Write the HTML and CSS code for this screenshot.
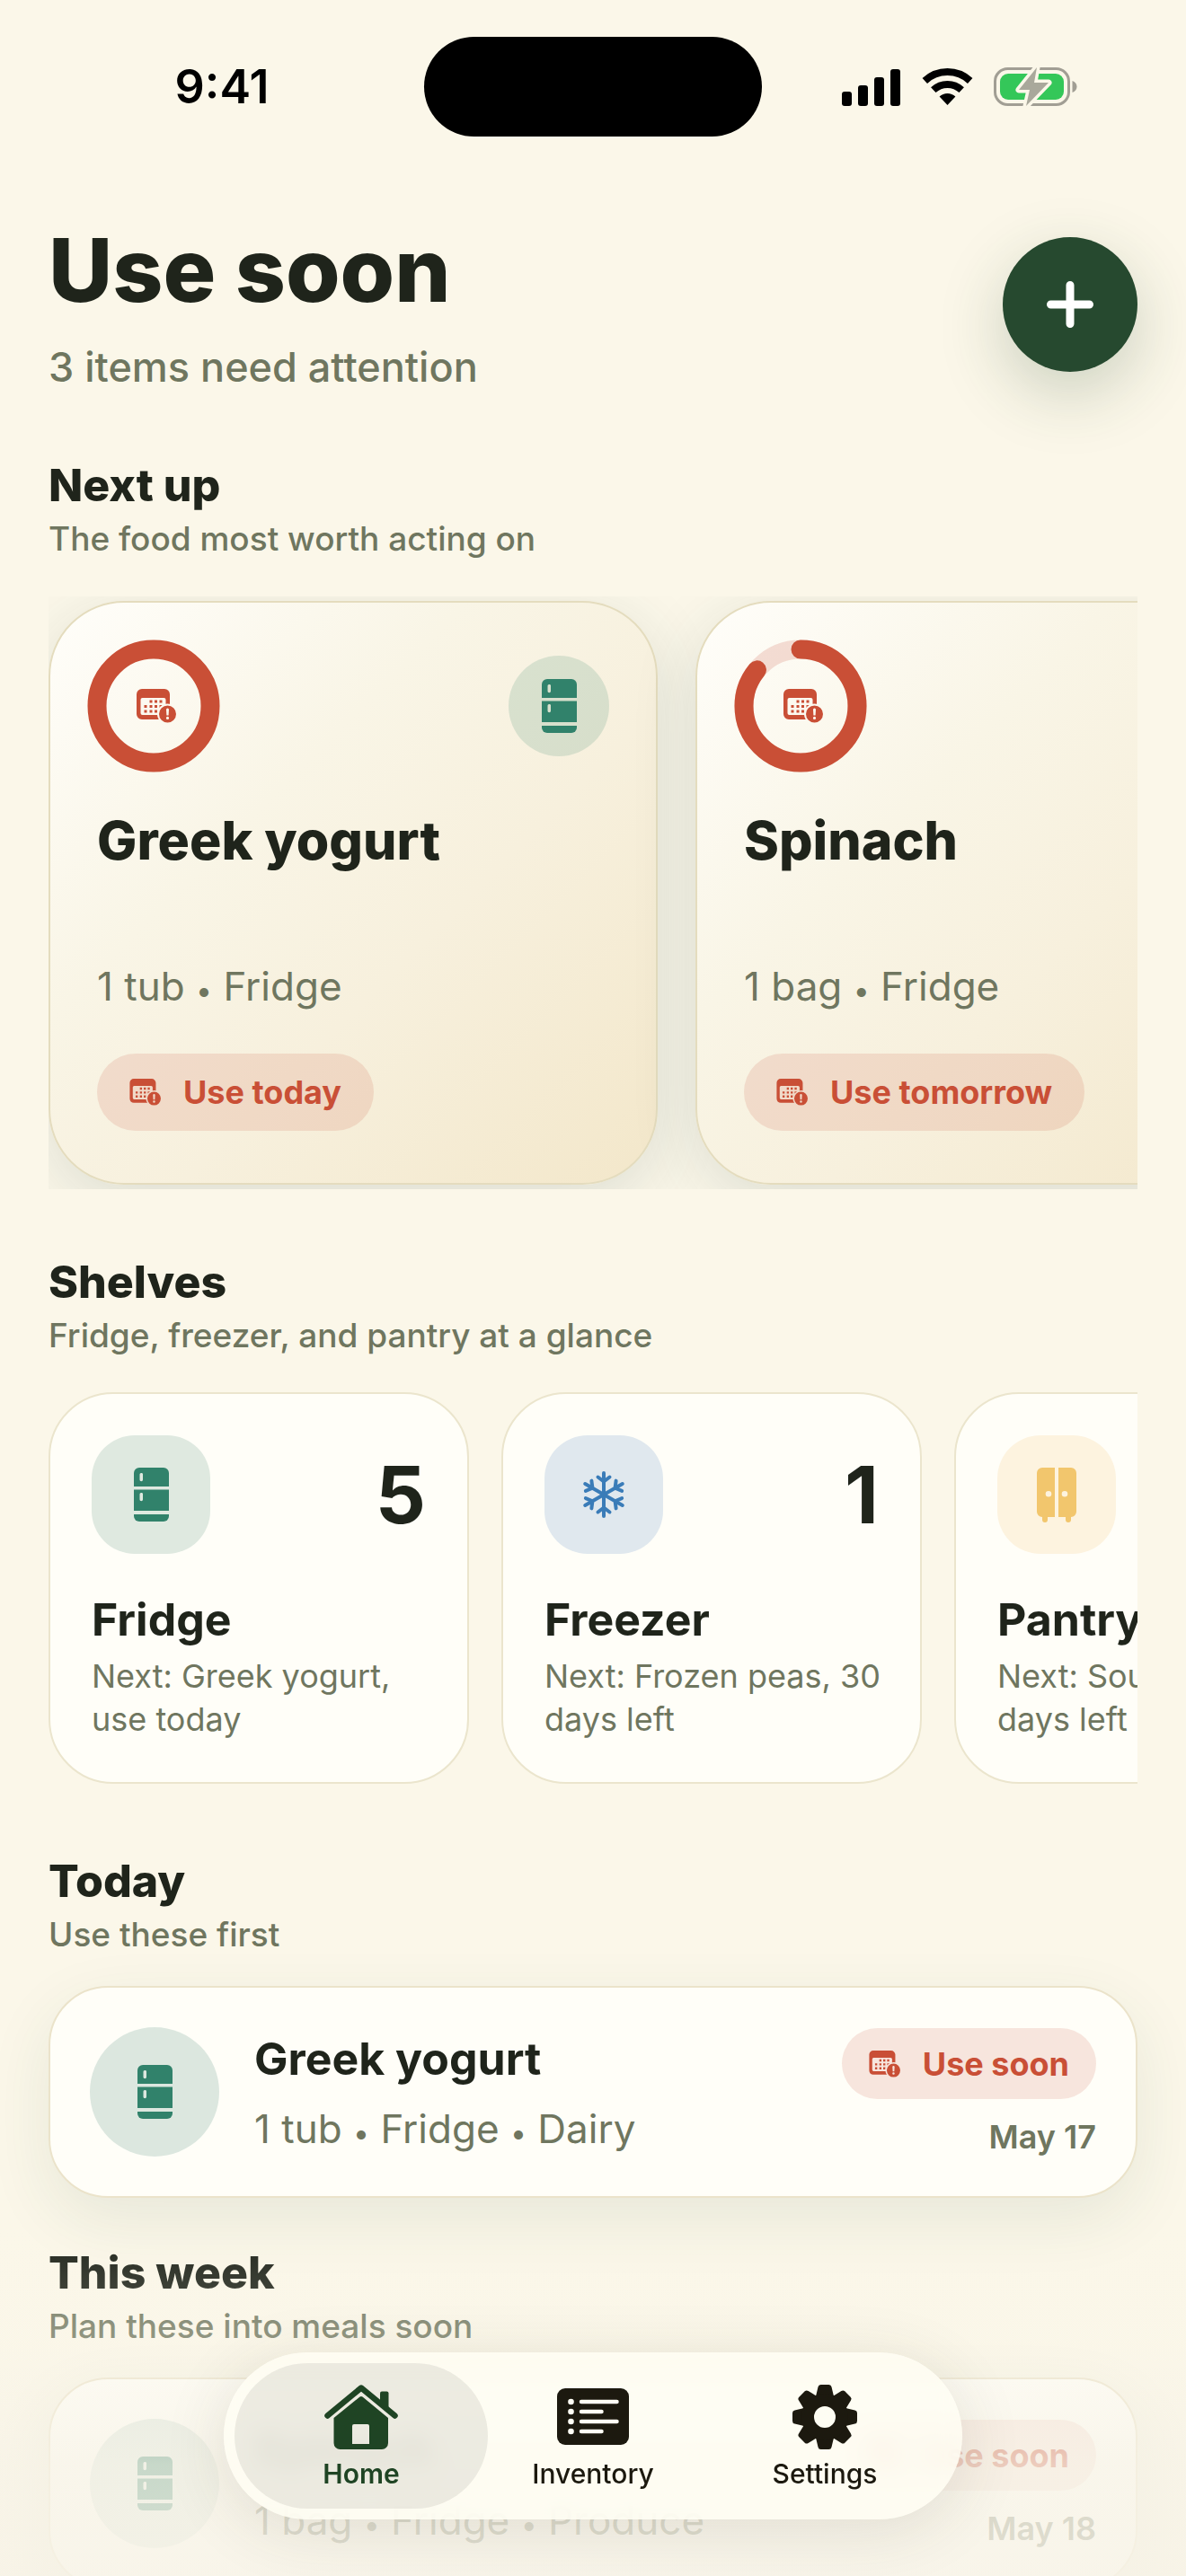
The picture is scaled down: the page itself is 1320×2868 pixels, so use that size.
FILE: index.html
```html
<!DOCTYPE html>
<html lang="en">
<head>
    <meta charset="UTF-8">
    <meta name="viewport" content="width=device-width, initial-scale=1.0">
    <title>Use soon</title>
    <link rel="stylesheet" href="styles.css">
</head>
<body>
    <!-- Shared icons -->
    <svg class="icon-defs" aria-hidden="true">
        <symbol id="icon-fridge" viewBox="0 0 39 60">
            <path fill-rule="evenodd" d="M6 0h27a6 6 0 0 1 6 6v15H0V6a6 6 0 0 1 6-6zM8 6a1.500 1.500 0 0 0-1.500 1.500v6a1.500 1.500 0 0 0 3.500 0v-6A1.500 1.500 0 0 0 8 6z"/>
            <path fill-rule="evenodd" d="M0 24.500h39v23.500H0zM8 28a1.500 1.500 0 0 0-1.500 1.500v6a1.500 1.500 0 0 0 3.500 0v-6A1.500 1.500 0 0 0 8 28z"/>
            <path d="M0 52h39v2a6 6 0 0 1-6 6H6a6 6 0 0 1-6-6z"/>
        </symbol>
        <symbol id="icon-calendar" viewBox="0 0 45 38">
            <mask id="badge-cut">
                <rect width="45" height="38" fill="#fff"/>
                <circle cx="34.500" cy="28" r="11.500" fill="#000"/>
            </mask>
            <g mask="url(#badge-cut)">
                <path fill-rule="evenodd" d="M6 0h25a6 6 0 0 1 6 6v22a6 6 0 0 1-6 6H6a6 6 0 0 1-6-6V6a6 6 0 0 1 6-6zM6.500 10a2 2 0 0 0-2 2v15a2 2 0 0 0 2 2h24a2 2 0 0 0 2-2V12a2 2 0 0 0-2-2z"/>
                <path d="M14.500 12.500h3v3h-3zM20 12.500h3v3h-3zM25.500 12.500h3v3h-3zM8.500 18h3v3h-3zM14.500 18h3v3h-3zM20 18h3v3h-3zM25.500 18h3v3h-3zM8.500 23.500h3v3h-3zM14.500 23.500h3v3h-3zM20 23.500h3v3h-3z"/>
            </g>
            <path fill-rule="evenodd" d="M34.500 18.500a9.500 9.500 0 1 1 0 19a9.500 9.500 0 0 1 0-19zM33 23l.4 6.500h2.200l.4-6.500a1.500 1.500 0 0 0-3 0zM34.500 30.800a1.600 1.600 0 1 0 0 3.200a1.600 1.600 0 0 0 0-3.200z"/>
        </symbol>
        <symbol id="icon-snowflake" viewBox="-26 -26 52 52">
            <g id="snow-arm" fill="none" stroke="currentColor" stroke-width="4" stroke-linecap="round" stroke-linejoin="round">
                <path d="M0 0V-24M-6.500-19.500L0-14.500L6.500-19.500"/>
            </g>
            <use href="#snow-arm" transform="rotate(60)"/>
            <use href="#snow-arm" transform="rotate(120)"/>
            <use href="#snow-arm" transform="rotate(180)"/>
            <use href="#snow-arm" transform="rotate(240)"/>
            <use href="#snow-arm" transform="rotate(300)"/>
        </symbol>
        <symbol id="icon-cabinet" viewBox="0 0 44 61">
            <path fill-rule="evenodd" d="M6 0h14v55h-8v3a3 3 0 0 1-6 0v-3a6 6 0 0 1-6-6V6a6 6 0 0 1 6-6zM13 26a3.300 3.300 0 1 0 0 6.600a3.300 3.300 0 0 0 0-6.600z"/>
            <path fill-rule="evenodd" d="M24 0h14a6 6 0 0 1 6 6v43a6 6 0 0 1-6 6v3a3 3 0 0 1-6 0v-3h-8zM31 26a3.300 3.300 0 1 0 0 6.600a3.300 3.300 0 0 0 0-6.600z"/>
        </symbol>
    </svg>

    <div class="screen">
        <div class="status-bar">
            <span class="status-time">9:41</span>
            <span class="island"></span>
            <div class="status-icons">
                <svg width="67" height="42" viewBox="0 0 67 42" aria-hidden="true">
                    <rect x="0" y="26" width="11" height="16" rx="3"/>
                    <rect x="18" y="19" width="11" height="23" rx="3"/>
                    <rect x="36" y="10" width="11" height="32" rx="3"/>
                    <rect x="54" y="1" width="11" height="41" rx="3"/>
                </svg>
                <svg width="57" height="41" viewBox="0 0 57 41" aria-hidden="true">
                    <path d="M3.300 14A37 37 0 0 1 53.700 14M12.800 24.200A23 23 0 0 1 44.200 24.200" fill="none" stroke="#000" stroke-width="8"/>
                    <path d="M28.500 41L19.600 31.500A13 13 0 0 1 37.400 31.500z"/>
                </svg>
                <svg width="94" height="47" viewBox="0 0 94 47" aria-hidden="true">
                    <rect x="2.500" y="3.500" width="82" height="40" rx="14" fill="none" stroke="#a19e94" stroke-width="3"/>
                    <path d="M88.500 17c3 1 5 3.500 5 6.500s-2 5.500-5 6.500z" fill="#a19e94"/>
                    <rect x="8" y="9" width="71" height="29" rx="9" fill="#34c759"/>
                    <path class="bolt" d="M49 2L29 27h12l-4 18l25-26H46z"/>
                </svg>
            </div>
        </div>

        <main class="content">
            <header class="page-header">
                <div>
                    <h1>Use soon</h1>
                    <p class="subtitle">3 items need attention</p>
                </div>
                <button class="add-button" type="button" aria-label="Add item">
                    <svg width="52" height="52" viewBox="0 0 52 52" aria-hidden="true">
                        <path d="M26 4.500v43M4.500 26h43" stroke="#fff" stroke-width="9" stroke-linecap="round"/>
                    </svg>
                </button>
            </header>

            <section class="section">
                <h2>Next up</h2>
                <p class="section-note">The food most worth acting on</p>
                <div class="strip featured-strip">
                    <article class="featured-card">
                        <div class="featured-top">
                            <div class="ring">
                                <svg class="ring-track" viewBox="0 0 148 148" aria-hidden="true">
                                    <circle class="ring-value" cx="74" cy="74" r="63"/>
                                </svg>
                                <svg class="ring-icon" aria-hidden="true"><use href="#icon-calendar"/></svg>
                            </div>
                            <span class="place-badge"><svg class="fridge-icon" aria-hidden="true"><use href="#icon-fridge"/></svg></span>
                        </div>
                        <h3 class="featured-name">Greek yogurt</h3>
                        <p class="meta">1 tub <span class="dot">•</span> Fridge</p>
                        <span class="chip chip-large"><svg class="chip-icon" aria-hidden="true"><use href="#icon-calendar"/></svg>Use today</span>
                    </article>
                    <article class="featured-card">
                        <div class="featured-top">
                            <div class="ring">
                                <svg class="ring-track" viewBox="0 0 148 148" aria-hidden="true">
                                    <circle class="ring-base" cx="74" cy="74" r="63"/>
                                    <circle class="ring-value" cx="74" cy="74" r="63" pathLength="100" stroke-dasharray="86 14"/>
                                </svg>
                                <svg class="ring-icon" aria-hidden="true"><use href="#icon-calendar"/></svg>
                            </div>
                            <span class="place-badge"><svg class="fridge-icon" aria-hidden="true"><use href="#icon-fridge"/></svg></span>
                        </div>
                        <h3 class="featured-name">Spinach</h3>
                        <p class="meta">1 bag <span class="dot">•</span> Fridge</p>
                        <span class="chip chip-large"><svg class="chip-icon" aria-hidden="true"><use href="#icon-calendar"/></svg>Use tomorrow</span>
                    </article>
                </div>
            </section>

            <section class="section">
                <h2>Shelves</h2>
                <p class="section-note">Fridge, freezer, and pantry at a glance</p>
                <div class="strip shelf-strip">
                    <article class="shelf-card">
                        <div class="shelf-top">
                            <span class="tile tile-fridge"><svg class="fridge-icon" aria-hidden="true"><use href="#icon-fridge"/></svg></span>
                            <span class="count">5</span>
                        </div>
                        <h3 class="item-name">Fridge</h3>
                        <p class="shelf-note">Next: Greek yogurt, use today</p>
                    </article>
                    <article class="shelf-card">
                        <div class="shelf-top">
                            <span class="tile tile-freezer"><svg class="snow-icon" aria-hidden="true"><use href="#icon-snowflake"/></svg></span>
                            <span class="count">1</span>
                        </div>
                        <h3 class="item-name">Freezer</h3>
                        <p class="shelf-note">Next: Frozen peas, 30 days left</p>
                    </article>
                    <article class="shelf-card">
                        <div class="shelf-top">
                            <span class="tile tile-pantry"><svg class="cabinet-icon" aria-hidden="true"><use href="#icon-cabinet"/></svg></span>
                        </div>
                        <h3 class="item-name">Pantry</h3>
                        <p class="shelf-note">Next: Sourdough, 2 days left</p>
                    </article>
                </div>
            </section>

            <section class="section">
                <h2>Today</h2>
                <p class="section-note">Use these first</p>
                <article class="item-row">
                    <span class="item-badge"><svg class="fridge-icon" aria-hidden="true"><use href="#icon-fridge"/></svg></span>
                    <div class="item-text">
                        <h3 class="item-name">Greek yogurt</h3>
                        <p class="meta">1 tub <span class="dot">•</span> Fridge <span class="dot">•</span> Dairy</p>
                    </div>
                    <div class="item-side">
                        <span class="chip"><svg class="chip-icon" aria-hidden="true"><use href="#icon-calendar"/></svg>Use soon</span>
                        <time class="item-date">May 17</time>
                    </div>
                </article>
            </section>

            <section class="section section-week">
                <h2>This week</h2>
                <p class="section-note">Plan these into meals soon</p>
                <article class="item-row">
                    <span class="item-badge"><svg class="fridge-icon" aria-hidden="true"><use href="#icon-fridge"/></svg></span>
                    <div class="item-text">
                        <h3 class="item-name">Spinach</h3>
                        <p class="meta">1 bag <span class="dot">•</span> Fridge <span class="dot">•</span> Produce</p>
                    </div>
                    <div class="item-side">
                        <span class="chip"><svg class="chip-icon" aria-hidden="true"><use href="#icon-calendar"/></svg>Use soon</span>
                        <time class="item-date">May 18</time>
                    </div>
                </article>
            </section>
        </main>

        <div class="bottom-fade"></div>

        <nav class="tab-bar">
            <button class="tab tab-active" type="button">
                <svg width="82" height="72" viewBox="0 0 82 72" aria-hidden="true">
                    <path d="M3.500 34.500L41 3.500L78.500 34.500" fill="none" stroke="currentColor" stroke-width="6.500" stroke-linecap="round" stroke-linejoin="round"/>
                    <path d="M62 22V9.500a2 2 0 0 1 2-2h5.500a2 2 0 0 1 2 2V30z"/>
                    <path fill-rule="evenodd" d="M39.500 13.500a2.500 2.500 0 0 1 3 0L71 37v28a7 7 0 0 1-7 7H17.500a7 7 0 0 1-7-7V37zM33 44a2 2 0 0 0-2 2v20h19V46a2 2 0 0 0-2-2z"/>
                </svg>
                Home
            </button>
            <button class="tab" type="button">
                <svg width="80" height="72" viewBox="0 -4 80 72" aria-hidden="true">
                    <rect width="80" height="63" rx="9"/>
                    <g fill="#fffef5">
                        <circle cx="15.500" cy="15" r="3.300"/>
                        <circle cx="15.500" cy="26" r="3.300"/>
                        <circle cx="15.500" cy="37" r="3.300"/>
                        <circle cx="15.500" cy="48" r="3.300"/>
                    </g>
                    <path d="M27 15h39.500M27 26h22.500M27 37h39.500M27 48h22.500" stroke="#fffef5" stroke-width="4.500" stroke-linecap="round"/>
                </svg>
                Inventory
            </button>
            <button class="tab" type="button">
                <svg width="72" height="72" viewBox="-36 -36 72 72" aria-hidden="true">
                    <path id="gear-tooth" d="M-10-23L-7.500-33.500Q-7-36-4.500-36H4.500Q7-36 7.500-33.500L10-23z"/>
                    <use href="#gear-tooth" transform="rotate(45)"/>
                    <use href="#gear-tooth" transform="rotate(90)"/>
                    <use href="#gear-tooth" transform="rotate(135)"/>
                    <use href="#gear-tooth" transform="rotate(180)"/>
                    <use href="#gear-tooth" transform="rotate(225)"/>
                    <use href="#gear-tooth" transform="rotate(270)"/>
                    <use href="#gear-tooth" transform="rotate(315)"/>
                    <circle r="19" fill="none" stroke="currentColor" stroke-width="14"/>
                </svg>
                Settings
            </button>
        </nav>
    </div>
</body>
</html>
```

FILE: styles.css
```css
* {
    margin: 0;
    padding: 0;
    box-sizing: border-box;
}

body {
    background-color: #fbf7e9;
    color: #1f241b;
    font-family: Inter, "Liberation Sans", sans-serif;
}

button {
    border: none;
    background: none;
    font-family: inherit;
    cursor: pointer;
}

.icon-defs {
    position: absolute;
    width: 0;
    height: 0;
}

.screen svg {
    display: block;
    flex-shrink: 0;
}

.screen {
    position: relative;
    height: 100vh;
    overflow: hidden;
}

/* Status bar */
.status-bar {
    display: grid;
    grid-template-columns: 1fr 376px 1fr;
    align-items: center;
    height: 186px;
    padding-top: 7px;
    color: #000;
}

.status-time {
    padding-left: 22px;
    text-align: center;
    font-size: 52px;
    font-weight: 600;
}

.island {
    height: 111px;
    border-radius: 56px;
    background-color: #000;
}

.status-icons {
    display: flex;
    align-items: center;
    justify-content: center;
    gap: 22px;
    padding-right: 32px;
}

.bolt {
    fill: #a9a89b;
    stroke: #fbf7e9;
    stroke-width: 7;
    stroke-linejoin: round;
    paint-order: stroke;
}

/* Header */
.content {
    padding: 55px 54px 0;
}

.page-header {
    display: flex;
    align-items: center;
    justify-content: space-between;
    margin-bottom: 74px;
}

h1 {
    font-size: 98px;
    font-weight: 800;
    line-height: 120px;
}

.subtitle {
    margin-top: 21px;
    font-size: 45px;
    font-weight: 500;
    line-height: 54px;
    color: #6f765f;
}

.add-button {
    display: flex;
    align-items: center;
    justify-content: center;
    width: 150px;
    height: 150px;
    border-radius: 50%;
    background-color: #26492f;
    box-shadow: 0 24px 72px rgba(38, 73, 47, 0.22);
}

/* Sections */
.section {
    margin-bottom: 78px;
}

h2 {
    font-size: 50px;
    font-weight: 800;
    line-height: 60px;
}

.section-note {
    margin-top: 9px;
    font-size: 37px;
    font-weight: 500;
    line-height: 42px;
    color: #6f765f;
}

.section-week {
    margin-top: -25px;
}

.strip {
    display: flex;
    overflow-x: auto;
    scrollbar-width: none;
}

.meta {
    font-size: 44px;
    line-height: 54px;
    color: #6f765f;
}

.dot {
    font-size: 32px;
    line-height: 1;
}

.item-name {
    font-size: 50px;
    font-weight: 700;
    line-height: 60px;
}

/* Chips */
.chip {
    display: flex;
    align-items: center;
    gap: 24px;
    height: 79px;
    padding: 0 30px;
    border-radius: 40px;
    background-color: rgba(201, 79, 54, 0.14);
    color: #c94f36;
    font-size: 36px;
    font-weight: 700;
    white-space: nowrap;
}

.chip-large {
    align-self: flex-start;
    height: 86px;
    margin-top: 48px;
    padding: 0 36px;
    border-radius: 43px;
}

.chip-icon {
    width: 36px;
    height: 30px;
    fill: currentColor;
}

.fridge-icon {
    width: 39px;
    height: 60px;
    fill: #31826b;
}

/* Next up */
.featured-strip {
    gap: 42px;
    margin-top: 43px;
    margin-bottom: -5px;
    padding: 5px 0;
}

.featured-card {
    display: flex;
    flex: 0 0 678px;
    flex-direction: column;
    min-height: 650px;
    padding: 52px;
    border: 2px solid #e4dcbe;
    border-radius: 84px;
    background: linear-gradient(135deg, #fffefa 0%, #f9f5e6 35%, #f7f0dd 60%, #f3e7ca 100%);
    box-shadow: 0 18px 72px rgba(38, 73, 70, 0.14);
}

.featured-top {
    display: flex;
    align-items: center;
    justify-content: space-between;
}

.ring {
    display: grid;
    place-items: center;
    width: 126px;
    height: 126px;
}

.ring-track,
.ring-icon {
    grid-area: 1 / 1;
}

/* The stroke runs half outside the ring's own box */
.ring-track {
    width: 148px;
    height: 148px;
    margin: -11px;
    fill: none;
    stroke: #c94f36;
    stroke-width: 21;
    stroke-linecap: round;
    transform: rotate(-90deg);
}

.ring-base {
    opacity: 0.18;
}

.ring-icon {
    width: 45px;
    height: 38px;
    margin-left: 7px;
    fill: #c94f36;
}

.place-badge {
    display: grid;
    place-items: center;
    width: 112px;
    height: 112px;
    border-radius: 50%;
    background-color: rgba(49, 130, 107, 0.16);
}

.featured-name {
    min-height: 144px;
    margin-top: 51px;
    margin-bottom: 27px;
    font-size: 59px;
    font-weight: 800;
    line-height: 72px;
}

/* Shelves */
.shelf-strip {
    gap: 36px;
    margin-top: 42px;
}

.shelf-card {
    flex: 0 0 468px;
    padding: 46px;
    border: 2px solid #ebe5cd;
    border-radius: 72px;
    background-color: #fffef8;
}

.shelf-top {
    display: flex;
    align-items: center;
    justify-content: space-between;
    margin-bottom: 43px;
}

.tile {
    display: grid;
    place-items: center;
    width: 132px;
    height: 132px;
    border-radius: 48px;
}

.tile-fridge {
    background-color: #dfe9e0;
}

.tile-freezer {
    background-color: #e0e8ee;
    color: #3a7cb8;
}

.tile-pantry {
    background-color: #fdf3df;
}

.snow-icon {
    width: 52px;
    height: 52px;
}

.cabinet-icon {
    width: 44px;
    height: 61px;
    fill: #f2c66d;
}

.count {
    font-size: 88px;
    font-weight: 700;
    line-height: 108px;
}

.shelf-note {
    margin-top: 9px;
    margin-right: -12px;
    font-size: 36px;
    line-height: 48px;
    color: #6f765f;
}

/* Item rows */
.item-row {
    display: flex;
    align-items: center;
    margin-top: 36px;
    padding: 44px;
    border: 2px solid #ebe3ca;
    border-radius: 66px;
    background-color: #fffef8;
    box-shadow: 0 24px 72px rgba(38, 73, 60, 0.09);
}

.item-badge {
    display: grid;
    place-items: center;
    width: 144px;
    height: 144px;
    margin-right: 39px;
    border-radius: 50%;
    background-color: #dce7df;
}

.item-text {
    flex: 1;
}

.item-text .meta {
    margin-top: 21px;
}

.item-side {
    display: flex;
    flex-direction: column;
    align-items: flex-end;
    gap: 21px;
}

.item-date {
    font-size: 36px;
    font-weight: 600;
    line-height: 42px;
    color: #6f765f;
}

/* Content fades out behind the tab bar */
.bottom-fade {
    position: absolute;
    right: 0;
    bottom: 0;
    left: 0;
    height: 388px;
    background: linear-gradient(rgba(250, 246, 233, 0), rgba(249, 245, 232, 0.25) 32%, rgba(247, 243, 231, 0.76) 68%, rgba(247, 243, 231, 0.84));
    pointer-events: none;
}

/* Tab bar */
.tab-bar {
    position: absolute;
    bottom: 63px;
    left: 50%;
    display: flex;
    padding: 12px;
    border-radius: 93px;
    background-color: rgba(255, 254, 244, 0.8);
    box-shadow: 0 12px 72px rgba(60, 60, 40, 0.12);
    backdrop-filter: blur(12px);
    transform: translateX(-50%);
}

.tab {
    display: flex;
    flex-direction: column;
    align-items: center;
    gap: 9px;
    width: 282px;
    height: 162px;
    padding-top: 24px;
    border-radius: 81px;
    color: #1c190f;
    fill: currentColor;
    font-size: 30px;
    font-weight: 500;
    line-height: 36px;
}

.tab + .tab {
    margin-left: -24px;
}

.tab-active {
    background-color: rgba(60, 60, 40, 0.09);
    color: #1f4424;
    font-weight: 600;
}
```
